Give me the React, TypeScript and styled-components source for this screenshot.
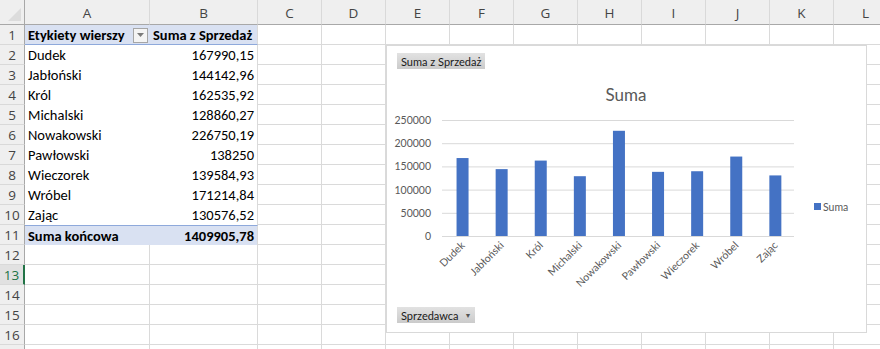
import styled, { createGlobalStyle } from "styled-components";

type CellKind = "plain" | "pivotHead" | "pivotBody" | "pivotTotal";

interface CellProps {
  $kind: CellKind;
  $col: number;
  $align?: "left" | "right";
}

const COLS = ["A", "B", "C", "D", "E", "F", "G", "H", "I", "J", "K", "L"];
const ROW_COUNT = 17;
const VISIBLE_LABELS = 16;
const ACTIVE_ROW = 13;

const sales: [string, number][] = [
  ["Dudek", 167990.15],
  ["Jabłoński", 144142.96],
  ["Król", 162535.92],
  ["Michalski", 128860.27],
  ["Nowakowski", 226750.19],
  ["Pawłowski", 138250],
  ["Wieczorek", 139584.93],
  ["Wróbel", 171214.84],
  ["Zając", 130576.52],
];

const total = 1409905.78;

const fmt = (n: number) => n.toString().replace(".", ",");

const GlobalStyle = createGlobalStyle`
  html, body {
    margin: 0;
    padding: 0;
    background: #ffffff;
  }
  body {
    width: 880px;
    height: 349px;
    overflow: hidden;
  }
`;

const FilterButton = () => (
  <Filter>
    <svg width="7" height="4" viewBox="0 0 7 4">
      <path d="M0 0 H7 L3.5 4 Z" fill="#7a7a7a" />
    </svg>
  </Filter>
);

const cellContent = (row: number, col: number) => {
  if (row === 1 && col === 0)
    return (
      <>
        <span>Etykiety wierszy</span>
        <FilterButton />
      </>
    );
  if (row === 1 && col === 1) return "Suma z Sprzedaż";
  if (row >= 2 && row <= 10) {
    const [name, value] = sales[row - 2];
    return col === 0 ? name : col === 1 ? fmt(value) : null;
  }
  if (row === 11 && col === 0) return "Suma końcowa";
  if (row === 11 && col === 1) return fmt(total);
  return null;
};

const kindOf = (row: number, col: number): CellKind => {
  if (col > 1) return "plain";
  if (row === 1) return "pivotHead";
  if (row >= 2 && row <= 10) return "pivotBody";
  if (row === 11) return "pivotTotal";
  return "plain";
};

const Y0 = 190;
const yOf = (v: number) => Y0 - (v * 116) / 250000;
const PLOT_LEFT = 55;
const PLOT_RIGHT = 407;
const STEP = 39.1;
const centerOf = (i: number) => 56 + STEP * (i + 0.5);

const SalesChart = () => (
  <Plot width="479" height="286" viewBox="0 0 479 286">
    <text x="239" y="55" textAnchor="middle" fontSize="17" fill="#595959">
      Suma
    </text>
    {[0, 50000, 100000, 150000, 200000, 250000].map((v) => (
      <g key={v}>
        <line x1={PLOT_LEFT} x2={PLOT_RIGHT} y1={yOf(v) + 0.5} y2={yOf(v) + 0.5} stroke="#d9d9d9" />
        <text x="44" y={yOf(v)} dominantBaseline="central" textAnchor="end" fontSize="10.5" fill="#595959">
          {v}
        </text>
      </g>
    ))}
    {sales.map(([name, value], i) => (
      <g key={name}>
        <rect x={centerOf(i) - 6} y={yOf(value)} width="12" height={Y0 - yOf(value)} fill="#4472c4" />
        <text
          x={centerOf(i) + 3}
          y="200"
          textAnchor="end"
          fontSize="10.5"
          fill="#595959"
          transform={`rotate(-45 ${centerOf(i) + 3} 200)`}
        >
          {name}
        </text>
      </g>
    ))}
    <rect x="427" y="157" width="7" height="7" fill="#4472c4" />
    <text x="436" y="160.5" dominantBaseline="central" fontSize="10.5" fill="#595959">
      Suma
    </text>
  </Plot>
);

const App = () => {
  const rows = Array.from({ length: ROW_COUNT }, (_, i) => i + 1);
  return (
    <>
      <GlobalStyle />
      <Sheet>
        <Corner />
        {COLS.map((c) => (
          <ColHeader key={c}>{c}</ColHeader>
        ))}
        {rows.map((row) => (
          <Row key={row}>
            <RowHeader $active={row === ACTIVE_ROW}>{row <= VISIBLE_LABELS ? row : null}</RowHeader>
            {COLS.map((c, col) => (
              <Cell key={c} $kind={kindOf(row, col)} $col={col} $align={col === 1 && row > 1 ? "right" : "left"}>
                {cellContent(row, col)}
              </Cell>
            ))}
          </Row>
        ))}
        <ChartBox>
          <SalesChart />
          <FieldButton>Suma z Sprzedaż</FieldButton>
          <FieldButton>
            Sprzedawca <Caret>▼</Caret>
          </FieldButton>
        </ChartBox>
      </Sheet>
    </>
  );
};

const Sheet = styled.div`
  position: relative;
  display: grid;
  grid-template-columns: 25px 125px 108px repeat(10, 64px);
  grid-template-rows: 25px repeat(17, 20px);
  width: 880px;
  height: 349px;
  overflow: hidden;
  font-family: Carlito, Lato, "Liberation Sans", sans-serif;
  font-size: 14.5px;
  color: #000000;
`;

const Row = styled.div`
  display: contents;
`;

const Corner = styled.div`
  position: relative;
  background: #efefef;
  border-right: 1px solid #a8a8a8;
  border-bottom: 1px solid #a8a8a8;
  box-sizing: border-box;

  &::after {
    content: "";
    position: absolute;
    right: 3px;
    bottom: 3px;
    border-left: 13px solid transparent;
    border-bottom: 13px solid #dcdcdc;
  }
`;

const ColHeader = styled.div`
  display: flex;
  align-items: center;
  justify-content: center;
  padding-top: 2px;
  box-sizing: border-box;
  background: #efefef;
  border-right: 1px solid #d9d9d9;
  border-bottom: 1px solid #a8a8a8;
  font-family: "Open Sans", "Noto Sans", sans-serif;
  font-size: 13.5px;
  color: #444444;
`;

const RowHeader = styled.div<{ $active: boolean }>`
  display: flex;
  align-items: center;
  justify-content: center;
  box-sizing: border-box;
  background: ${(p) => (p.$active ? "#e1e1e1" : "#efefef")};
  border-bottom: 1px solid #d9d9d9;
  border-right: ${(p) => (p.$active ? "2px solid #217346" : "1px solid #a8a8a8")};
  font-family: "Open Sans", "Noto Sans", sans-serif;
  font-size: 13.5px;
  color: ${(p) => (p.$active ? "#217346" : "#444444")};
`;

const kindStyles: Record<CellKind, string> = {
  plain: "background: #ffffff; border-right: 1px solid #dadada; border-bottom: 1px solid #dadada;",
  pivotHead: "background: #d9e1f2; border-bottom: 1px solid #8ea9db; font-weight: 700;",
  pivotBody: "background: #ffffff;",
  pivotTotal: "background: #d9e1f2; border-top: 1px solid #8ea9db; font-weight: 700;",
};

const Cell = styled.div<CellProps>`
  display: flex;
  align-items: center;
  justify-content: ${(p) => (p.$align === "right" ? "flex-end" : "space-between")};
  padding: 0 3px;
  box-sizing: border-box;
  white-space: nowrap;
  overflow: hidden;
  ${(p) => kindStyles[p.$kind]}
  ${(p) => (p.$col === 1 ? "border-right: 1px solid #dadada;" : "")}
  ${(p) => (p.$kind === "pivotHead" && p.$col === 0 ? "padding-right: 2px;" : "")}
`;

const Filter = styled.span`
  display: flex;
  align-items: center;
  justify-content: center;
  width: 15px;
  height: 15px;
  box-sizing: border-box;
  background: #f4f4f4;
  border: 1px solid #a6a6a6;
  margin-top: 1px;
`;

const ChartBox = styled.div`
  position: absolute;
  left: 386px;
  top: 45px;
  width: 481px;
  height: 288px;
  box-sizing: border-box;
  background: #ffffff;
  border: 1px solid #d9d9d9;
  display: flex;
  flex-direction: column;
  justify-content: space-between;
  align-items: flex-start;
  padding: 7px 10px 9px;
`;

const Plot = styled.svg`
  position: absolute;
  left: 0;
  top: 0;
  font-family: Lato, "Liberation Sans", sans-serif;
`;

const FieldButton = styled.span`
  position: relative;
  display: inline-flex;
  align-items: center;
  height: 16px;
  padding: 0 4px;
  background: linear-gradient(#e2e2e2, #cbcbcb);
  font-family: Lato, "Liberation Sans", sans-serif;
  font-size: 11px;
  color: #1a1a1a;
  white-space: pre;
`;

const Caret = styled.span`
  font-size: 7px;
  color: #555555;
  margin-left: 3px;
`;

export default App;
